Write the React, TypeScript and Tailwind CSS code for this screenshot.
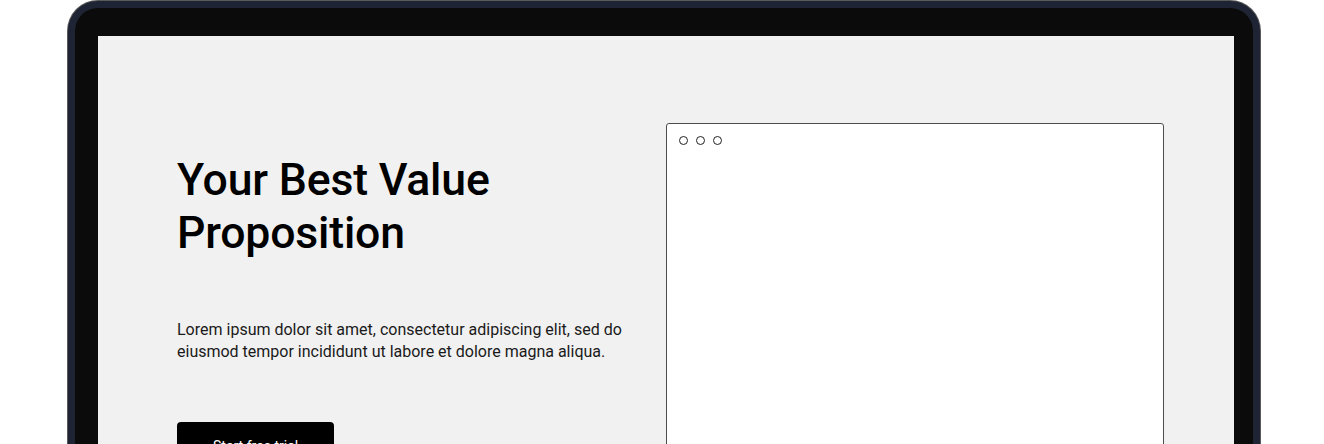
import type { ReactNode } from "react";

const Dot = () => (
  <span className="block w-[9px] h-[9px] rounded-full border border-[#222]" />
);

const BrowserWindow = ({ children }: { children?: ReactNode }) => (
  <div className="w-[498px] h-[420px] bg-white border border-[#4d4d4d] rounded-[3px]">
    <div className="flex items-center gap-[8px] pl-[12px] pt-[12px]">
      <Dot />
      <Dot />
      <Dot />
    </div>
    {children}
  </div>
);

export default function App() {
  return (
    <div className="w-full h-[444px] bg-white overflow-hidden font-['Roboto',sans-serif]">
      <div className="ml-[68px] mt-[1px] w-[1192px] h-[520px] rounded-[30px] border-[7px] border-[#1e2433] bg-[#0b0b0b] shadow-[0_0_0_1px_#5a5a5a] pt-[28px] pl-[23px] pr-[19px]">
        <div className="h-[480px] bg-[#f1f1f1] flex pl-[79px] pt-[87px]">
          <div className="w-[489px] pt-[31px]">
            <h1 className="text-[44.6px] leading-[53px] font-medium text-black tracking-[-0.2px]">
              Your Best Value
              <br />
              Proposition
            </h1>
            <p className="mt-[59px] w-[470px] text-[16px] leading-[22px] text-[#1a1a1a]">
              Lorem ipsum dolor sit amet, consectetur adipiscing elit, sed do eiusmod tempor incididunt ut labore et dolore magna aliqua.
            </p>
            <button className="mt-[59px] h-[48px] px-[36px] bg-black text-white text-[14px] rounded-[4px]">
              Start free trial
            </button>
          </div>
          <BrowserWindow />
        </div>
      </div>
    </div>
  );
}
